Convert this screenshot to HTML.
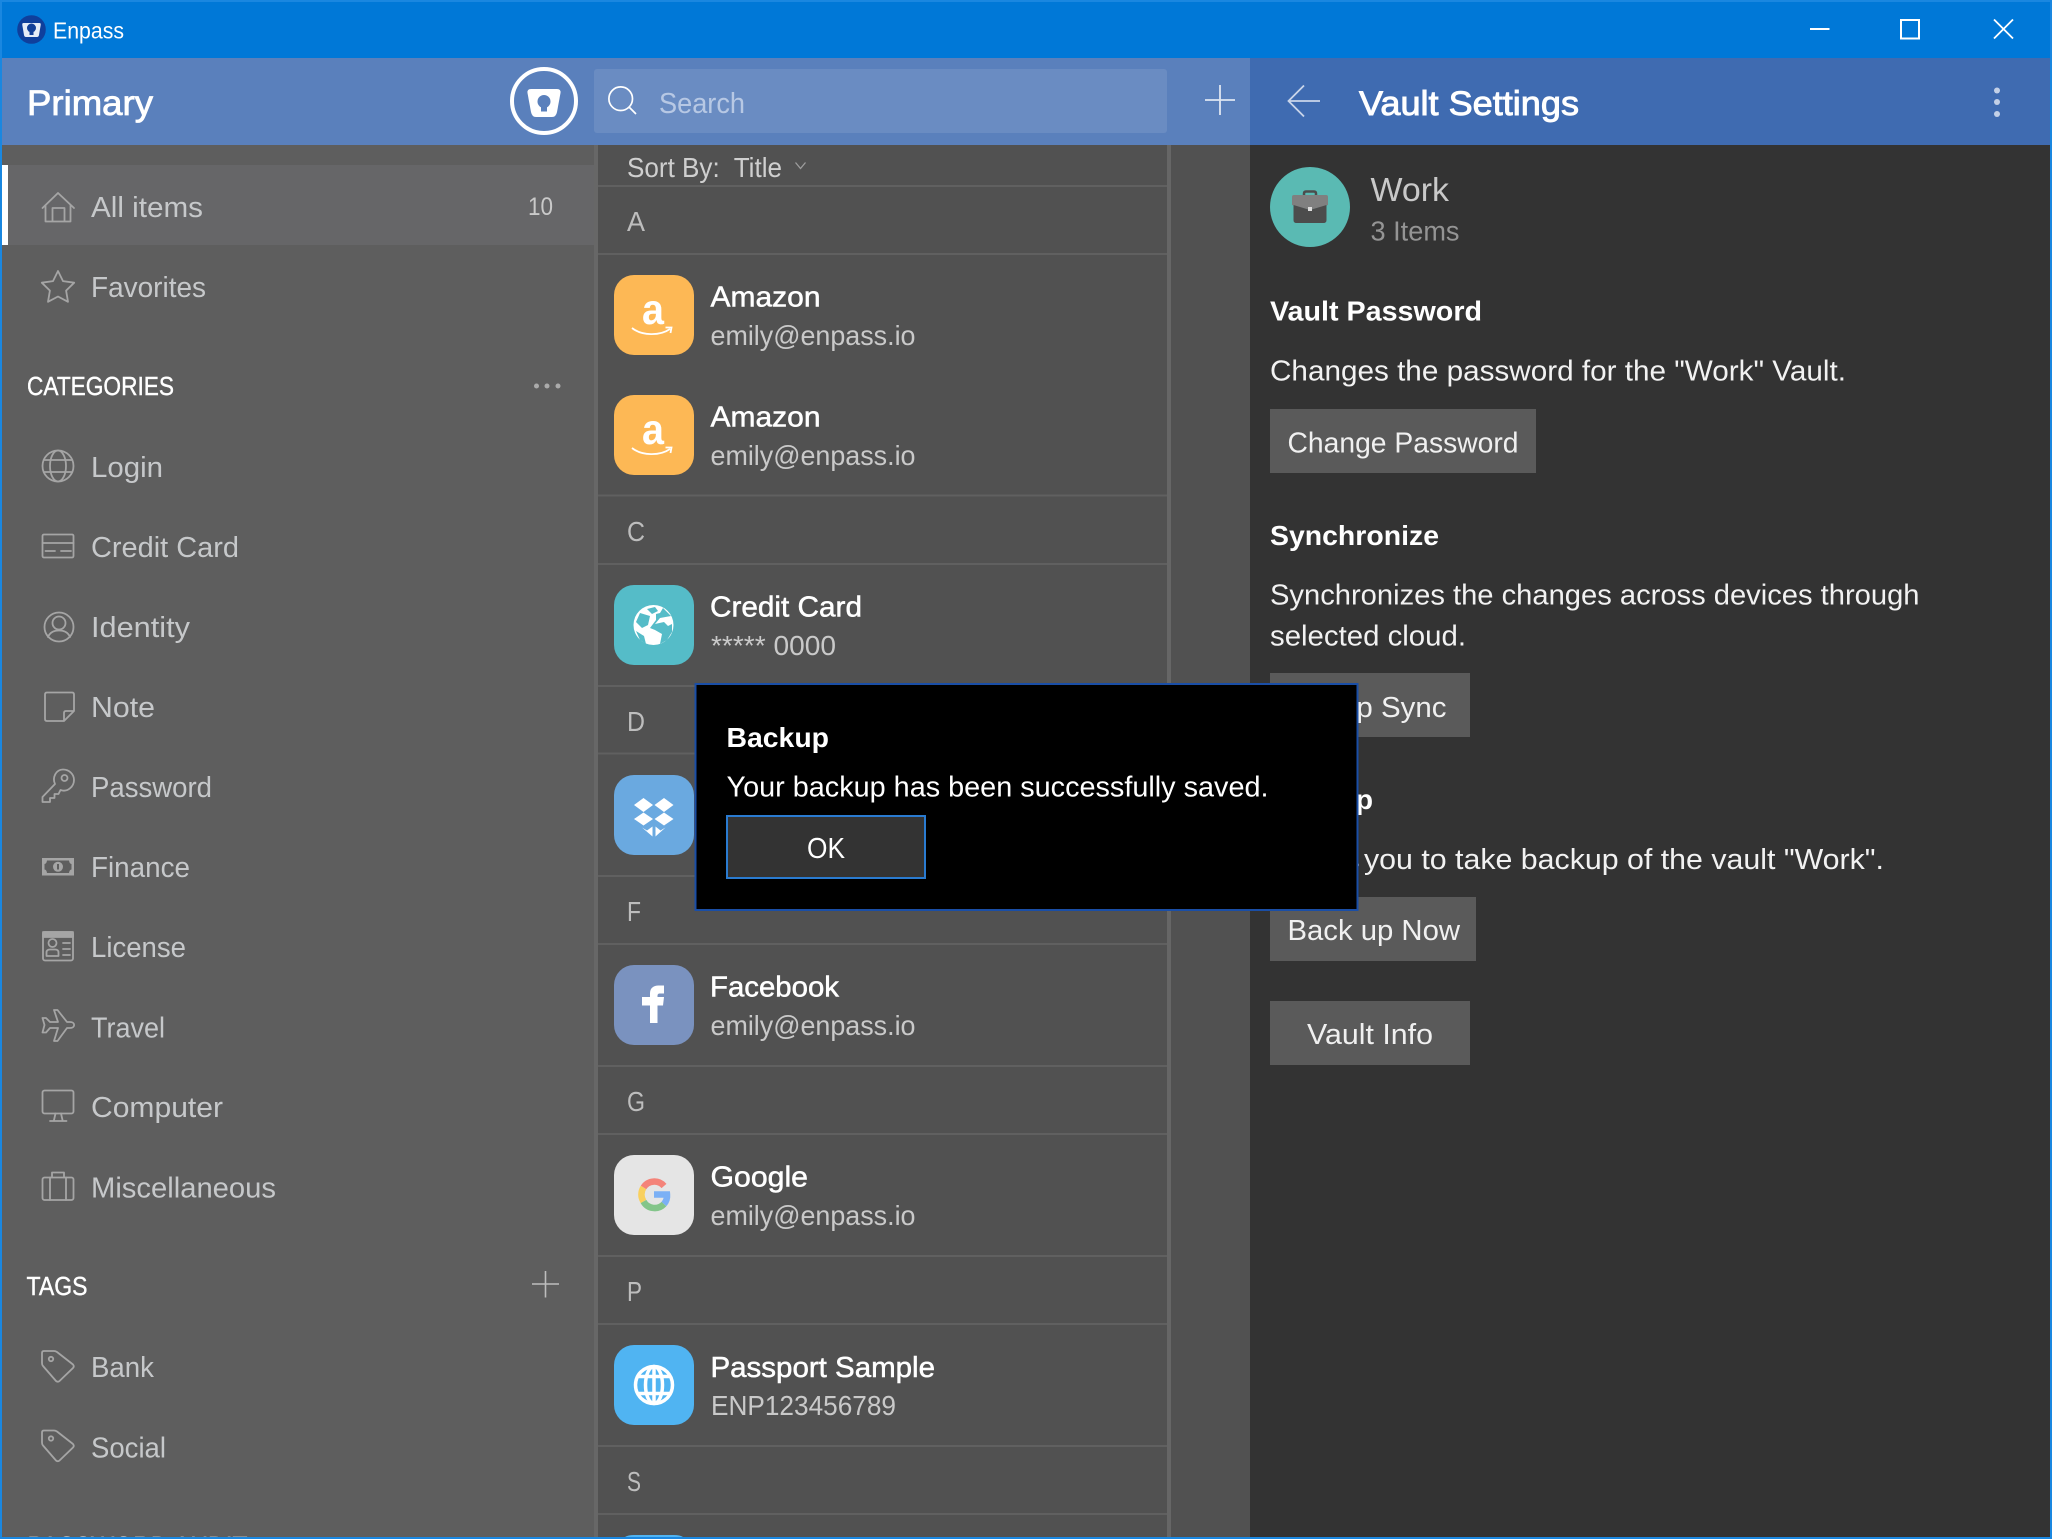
<!DOCTYPE html>
<html>
<head>
<meta charset="utf-8">
<title>Enpass</title>
<style>
html,body{margin:0;padding:0;background:#333;overflow:hidden;width:2052px;height:1539px}
svg{display:block;position:absolute;left:0;top:0}
text{font-family:"Liberation Sans",sans-serif;white-space:pre}
.nav{font-size:29px;fill:#c6c8ca}
.hd{font-size:26px;fill:#fff;stroke:#fff;stroke-width:.4px}
.ti{font-size:29px;fill:#fff;stroke:#fff;stroke-width:.5px}
.su{font-size:28px;fill:#c9c9c9}
.le{font-size:28px;fill:#bdbdbd}
.bd{font-size:29px;fill:#f2f2f2}
.bt{font-size:29px;fill:#f0f0f0}
.b{font-size:28px;fill:#fff;font-weight:bold}
.ic{fill:none;stroke:#a5a5a5;stroke-width:1.8;stroke-linejoin:round;stroke-linecap:round}
.ln{fill:#606060}
</style>
</head>
<body>
<svg width="2052" height="1539" viewBox="0 0 2052 1539" xmlns="http://www.w3.org/2000/svg">
<!-- backgrounds -->
<rect width="2052" height="1539" fill="#333333"/>
<rect x="0" y="145" width="594" height="1394" fill="#5e5e5e"/>
<rect x="594" y="145" width="4" height="1394" fill="#676767"/>
<rect x="598" y="145" width="652" height="1394" fill="#515151"/>
<rect x="1167" y="145" width="4" height="1394" fill="#666666"/>
<!-- title bar -->
<rect width="2052" height="58" fill="#0078d7"/>
<rect x="0" y="58" width="1250" height="87" fill="#5a80bc"/>
<rect x="1250" y="58" width="802" height="87" fill="#3f6bb1"/>

<!-- app icon -->
<circle cx="31.500" cy="29.500" r="14.300" fill="#0f3f9c"/>
<path d="M23.500 23 H39.500 Q41 23 40.700 25 L39 35 Q38.700 37 37 37 H26 Q24.300 37 24 35 L22.300 25 Q22 23 23.500 23Z" fill="#e6ecf7"/>
<circle cx="31.500" cy="28" r="4.500" fill="#123f98"/><rect x="29.500" y="29" width="4" height="6" fill="#123f98"/>
<text x="53" y="38.500" style="font-size:23px;fill:#fff" textLength="71" lengthAdjust="spacingAndGlyphs">Enpass</text>

<!-- window controls -->
<rect x="1810" y="28" width="19.500" height="2" fill="#fff"/>
<rect x="1901" y="20" width="18" height="18.500" fill="none" stroke="#fff" stroke-width="2"/>
<path d="M1994 19.500 L2013 38.500 M2013 19.500 L1994 38.500" stroke="#fff" stroke-width="1.800" fill="none"/>

<!-- header left -->
<text class="ti" x="27" y="115" style="font-size:35px;stroke-width:.8px" textLength="126" lengthAdjust="spacingAndGlyphs">Primary</text>
<circle cx="544" cy="101" r="32" fill="none" stroke="#fff" stroke-width="4"/>
<path d="M531 89 H557 Q561 89 560.500 93 L557 112 Q556 117 552 117 H536 Q532 117 531 112 L527.500 93 Q527 89 531 89Z" fill="#fff"/>
<circle cx="544" cy="101.500" r="6.500" fill="#5a80bc"/><rect x="541" y="102" width="6" height="9.500" fill="#5a80bc"/>

<!-- search -->
<rect x="594" y="69" width="573" height="64" rx="3" fill="#6a8cc2"/>
<circle cx="620.700" cy="98.700" r="11.800" fill="none" stroke="#fff" stroke-width="1.700"/>
<path d="M629 107 L636 114" stroke="#fff" stroke-width="1.700" fill="none"/>
<text x="659" y="113" style="font-size:29px;fill:#b7c8e4" textLength="86" lengthAdjust="spacingAndGlyphs">Search</text>
<path d="M1220 85 V115 M1205 100 H1235" stroke="#dfe6f2" stroke-width="1.800" fill="none"/>

<!-- header right -->
<path d="M1320 101 H1289 M1304 85.500 L1288.500 101 L1304 116.500" fill="none" stroke="#c9d5ea" stroke-width="1.800"/>
<text class="ti" x="1359" y="115" style="font-size:34px;stroke-width:.9px" textLength="220" lengthAdjust="spacingAndGlyphs">Vault Settings</text>
<circle cx="1997" cy="90.500" r="3" fill="#c3d0e7"/><circle cx="1997" cy="102" r="3" fill="#c3d0e7"/><circle cx="1997" cy="114" r="3" fill="#c3d0e7"/>

<!-- sidebar -->
<rect x="2" y="165" width="592" height="80" fill="#666668"/>
<rect x="2" y="165" width="6" height="80" fill="#fff"/>

<path class="ic" d="M42.500 208 L58 193 L74 208 M45.500 205 V221.500 H70.500 V205 M52.500 221.500 V208 H64.500 V221.500"/>
<text class="nav" x="91" y="217" textLength="112" lengthAdjust="spacingAndGlyphs">All items</text>
<text x="528" y="215" style="font-size:25px;fill:#c9c9c9" textLength="25" lengthAdjust="spacingAndGlyphs">10</text>

<path class="ic" d="M58 271 L63 281.100 L74.200 282.700 L66.100 290.600 L68 301.800 L58 296.500 L48 301.800 L49.900 290.600 L41.800 282.700 L53 281.100 Z"/>
<text class="nav" x="91" y="297" textLength="115" lengthAdjust="spacingAndGlyphs">Favorites</text>

<text class="hd" x="27" y="395" textLength="147" lengthAdjust="spacingAndGlyphs">CATEGORIES</text>
<circle cx="536.500" cy="386" r="2.500" fill="#ababab"/><circle cx="547" cy="386" r="2.500" fill="#ababab"/><circle cx="558" cy="386" r="2.500" fill="#ababab"/>

<g class="ic"><circle cx="58" cy="466" r="15.500"/><ellipse cx="58" cy="466" rx="8" ry="15.500"/><path d="M44.500 460 H71.500 M44.500 472 H71.500"/></g>
<text class="nav" x="91" y="477" textLength="72" lengthAdjust="spacingAndGlyphs">Login</text>

<g class="ic"><rect x="42.500" y="534.500" width="31" height="23" rx="1.500"/><path d="M42.500 543 H73.500 M45.500 551 H55 M61 551 H71"/></g>
<text class="nav" x="91" y="557" textLength="148" lengthAdjust="spacingAndGlyphs">Credit Card</text>

<g class="ic"><circle cx="59" cy="627" r="14.500"/><circle cx="59" cy="623" r="6.500"/><path d="M48 637 C50 632 54 630.500 59 630.500 C64 630.500 68 632 70 637"/></g>
<text class="nav" x="91" y="637" textLength="99" lengthAdjust="spacingAndGlyphs">Identity</text>

<path class="ic" d="M47 692.500 H72 Q74 692.500 74 694.500 V711 L64 721 H47 Q45 721 45 719 V694.500 Q45 692.500 47 692.500 Z M74 711 H66 Q64 711 64 713 V721"/>
<text class="nav" x="91" y="717" textLength="64" lengthAdjust="spacingAndGlyphs">Note</text>

<g class="ic"><path d="M55 784 L42.500 797 V802 H50 V798 H54.500 V794 H58.500 L60.500 790 C67 792.500 74 787 74 780 C74 774 69 769.500 63 769.500 C56 769.500 52 777.500 55 784 Z"/><circle cx="64.500" cy="778" r="3"/></g>
<text class="nav" x="91" y="797" textLength="121" lengthAdjust="spacingAndGlyphs">Password</text>

<rect x="42" y="858" width="32" height="17.500" fill="#a5a5a5"/>
<path d="M47 860.500 H69 Q69.500 864 71.500 864 V869.500 Q69.500 869.500 69 873 H47 Q46.500 869.500 44.500 869.500 V864 Q46.500 864 47 860.500Z" fill="#5e5e5e"/>
<circle cx="58" cy="866.800" r="5" fill="#a5a5a5"/><rect x="57" y="864" width="2" height="5.500" fill="#5e5e5e"/>
<text class="nav" x="91" y="877" textLength="99" lengthAdjust="spacingAndGlyphs">Finance</text>

<g class="ic"><rect x="43" y="932" width="30" height="28.500" rx="2"/><rect x="43" y="932" width="30" height="5" fill="#a5a5a5"/><circle cx="52.500" cy="943" r="4"/><path d="M46.500 956 V952.500 Q46.500 949.500 50 949.500 H55 Q58.500 949.500 58.500 952.500 V956 Z M63 943 H70 M63 949 H70 M63 955 H70"/></g>
<text class="nav" x="91" y="957" textLength="95" lengthAdjust="spacingAndGlyphs">License</text>

<path class="ic" d="M42.500 1018 H46 L50 1022 H58 L54 1010 H57.500 L67 1022 H70 C75.500 1022 75.500 1028 70 1028 H67 L57.500 1041 H54 L58 1028 H50 L46 1032.500 H42.500 L44.500 1025 Z"/>
<text class="nav" x="91" y="1037.500" textLength="74" lengthAdjust="spacingAndGlyphs">Travel</text>

<g class="ic"><rect x="42.500" y="1090.500" width="31" height="23" rx="2"/><path d="M55.500 1113.500 L54 1120 M61 1113.500 L62.500 1120 M50 1121 H66.500"/></g>
<text class="nav" x="91" y="1117" textLength="132" lengthAdjust="spacingAndGlyphs">Computer</text>

<g class="ic"><rect x="42.500" y="1177.500" width="31" height="22.500" rx="2"/><path d="M50 1177.500 V1200 M66 1177.500 V1200 M52 1177.500 V1172.500 H64 V1177.500"/></g>
<text class="nav" x="91" y="1197.500" textLength="185" lengthAdjust="spacingAndGlyphs">Miscellaneous</text>

<text class="hd" x="26.500" y="1295" textLength="61" lengthAdjust="spacingAndGlyphs">TAGS</text>
<path d="M545.500 1271 V1297.500 M532 1284 H559" stroke="#bdbdbd" stroke-width="1.600" fill="none"/>

<g class="ic"><path d="M44 1351 H54 Q55.500 1351 57 1352 L73 1364.500 Q74.500 1366.500 73 1368 L59.500 1381 Q58 1382.500 56 1381 L43 1366 Q42 1365 42 1363 V1353 Q42 1351 44 1351 Z"/><circle cx="51" cy="1359" r="2.200"/></g>
<text class="nav" x="91" y="1377" textLength="63" lengthAdjust="spacingAndGlyphs">Bank</text>
<g class="ic" transform="translate(0 79.500)"><path d="M44 1351 H54 Q55.500 1351 57 1352 L73 1364.500 Q74.500 1366.500 73 1368 L59.500 1381 Q58 1382.500 56 1381 L43 1366 Q42 1365 42 1363 V1353 Q42 1351 44 1351 Z"/><circle cx="51" cy="1359" r="2.200"/></g>
<text class="nav" x="91" y="1457.500" textLength="75" lengthAdjust="spacingAndGlyphs">Social</text>
<svg x="0" y="1530" width="400" height="7" viewBox="0 0 400 7"><text class="hd" x="27.500" y="25" textLength="220" lengthAdjust="spacingAndGlyphs">PASSWORD AUDIT</text></svg>

<!-- list -->
<text x="627" y="177" style="font-size:28px;fill:#cfcfcf" textLength="155" lengthAdjust="spacingAndGlyphs">Sort By:  Title</text>
<path d="M795.500 162.500 L800.500 168.500 L805.500 162.500" fill="none" stroke="#9d9d9d" stroke-width="1.300"/>
<rect class="ln" x="598" y="185" width="569" height="2"/>
<text class="le" x="627" y="231" textLength="18" lengthAdjust="spacingAndGlyphs">A</text>
<rect class="ln" x="598" y="253" width="569" height="2"/>

<rect x="614" y="275" width="80" height="80" rx="20" fill="#fdb855"/>
<text x="642" y="324" style="font-size:43px;font-weight:bold;fill:#fff" textLength="22" lengthAdjust="spacingAndGlyphs">a</text>
<path d="M632 328 C642 336 660 336 670 329 M665.500 327.500 L671.500 327.500 L670.500 333" fill="none" stroke="#fff" stroke-width="1.800"/>
<text class="ti" x="710.500" y="306.700" textLength="110" lengthAdjust="spacingAndGlyphs">Amazon</text>
<text class="su" x="710.500" y="345" textLength="205" lengthAdjust="spacingAndGlyphs">emily@enpass.io</text>

<rect x="614" y="395" width="80" height="80" rx="20" fill="#fdb855"/>
<text x="642" y="444" style="font-size:43px;font-weight:bold;fill:#fff" textLength="22" lengthAdjust="spacingAndGlyphs">a</text>
<path d="M632 448 C642 456 660 456 670 449 M665.500 447.500 L671.500 447.500 L670.500 453" fill="none" stroke="#fff" stroke-width="1.800"/>
<text class="ti" x="710.500" y="426.700" textLength="110" lengthAdjust="spacingAndGlyphs">Amazon</text>
<text class="su" x="710.500" y="465" textLength="205" lengthAdjust="spacingAndGlyphs">emily@enpass.io</text>

<rect class="ln" x="598" y="494.500" width="569" height="2"/>
<text class="le" x="627" y="541" textLength="18" lengthAdjust="spacingAndGlyphs">C</text>
<rect class="ln" x="598" y="563" width="569" height="2"/>

<rect x="614" y="585" width="80" height="80" rx="20" fill="#55bcc8"/>
<circle cx="653.500" cy="625" r="20" fill="#fff"/>
<path d="M640 613 L650 616 L648 625 L642 628 L636 622 Z M647 609 L655 607 L658 611 L652 614 Z M663 608 L671 616 L660 618 L655 624 L664 622 L668 626 L672 624 L672 632 L667 640 L660 644 L662 634 L655 630 L650 628 L656 620 L656 614 L660 613 Z M636 631 L644 636 L646 644 L640 640 Z" fill="#55bcc8"/>
<text class="ti" x="710" y="616.700" textLength="152" lengthAdjust="spacingAndGlyphs">Credit Card</text>
<text class="su" x="711" y="655" textLength="125" lengthAdjust="spacingAndGlyphs">***** 0000</text>

<rect class="ln" x="598" y="685" width="569" height="2"/>
<text class="le" x="627" y="731" textLength="18" lengthAdjust="spacingAndGlyphs">D</text>
<rect class="ln" x="598" y="752.500" width="569" height="2"/>

<rect x="614" y="775" width="80" height="80" rx="20" fill="#6aa9e0"/>
<path d="M643.500 798 L653 805 L643.500 812 L634 805 Z M664 798 L673.500 805 L664 812 L654.500 805 Z M643.500 812.500 L653 819 L643.500 825.500 L634 819 Z M664 812.500 L673.500 819 L664 825.500 L654.500 819 Z" fill="#fff"/>
<path d="M642 827.500 L647 830.500 L652.500 826.500 V836.500 Z M665.500 827.500 L660.500 830.500 L655.500 826.500 V836.500 Z" fill="#fff"/>

<rect class="ln" x="598" y="875" width="569" height="2"/>
<text class="le" x="627" y="921" textLength="14" lengthAdjust="spacingAndGlyphs">F</text>
<rect class="ln" x="598" y="943" width="569" height="2"/>

<rect x="614" y="965" width="80" height="80" rx="20" fill="#7a92bf"/>
<path d="M650 1023 V1005.500 H642 V997 H650 V993.500 C650 988 653.500 985.500 658.500 985.500 H664 V993.500 H660 C658 993.500 657.500 994.500 657.500 996 V997 H664 L663 1005.500 H657.500 V1023 Z" fill="#fff"/>
<text class="ti" x="710" y="996.700" textLength="129" lengthAdjust="spacingAndGlyphs">Facebook</text>
<text class="su" x="710.500" y="1035" textLength="205" lengthAdjust="spacingAndGlyphs">emily@enpass.io</text>

<rect class="ln" x="598" y="1065" width="569" height="2"/>
<text class="le" x="627" y="1111" textLength="18" lengthAdjust="spacingAndGlyphs">G</text>
<rect class="ln" x="598" y="1133" width="569" height="2"/>

<rect x="614" y="1155" width="80" height="80" rx="20" fill="#e5e5e5"/>
<g fill="none" stroke-width="6.500">
<path d="M664 1186 A12.800 12.800 0 0 0 643.500 1187.500" stroke="#f48379"/>
<path d="M643.500 1187.500 A12.800 12.800 0 0 0 643.500 1201.500" stroke="#f9d05e"/>
<path d="M643.500 1201.500 A12.800 12.800 0 0 0 664 1204" stroke="#83c58a"/>
<path d="M664 1204 A12.800 12.800 0 0 0 667 1194.500 H654" stroke="#7bb0f5"/>
</g>
<text class="ti" x="710.500" y="1186.700" textLength="97.500" lengthAdjust="spacingAndGlyphs">Google</text>
<text class="su" x="710.500" y="1225" textLength="205" lengthAdjust="spacingAndGlyphs">emily@enpass.io</text>

<rect class="ln" x="598" y="1255" width="569" height="2"/>
<text class="le" x="627" y="1301" textLength="15" lengthAdjust="spacingAndGlyphs">P</text>
<rect class="ln" x="598" y="1323" width="569" height="2"/>

<rect x="614" y="1345" width="80" height="80" rx="20" fill="#50b4f2"/>
<g fill="none" stroke="#fff" stroke-width="3.500"><circle cx="654" cy="1385" r="18.500"/><ellipse cx="654" cy="1385" rx="8.500" ry="18.500"/><path d="M654 1366.500 V1403.500 M638 1376.500 H670 M638 1393.500 H670"/></g>
<text class="ti" x="710.500" y="1377" textLength="224.500" lengthAdjust="spacingAndGlyphs">Passport Sample</text>
<text class="su" x="711" y="1415" textLength="185" lengthAdjust="spacingAndGlyphs">ENP123456789</text>

<rect class="ln" x="598" y="1445" width="569" height="2"/>
<text class="le" x="627" y="1491" textLength="14" lengthAdjust="spacingAndGlyphs">S</text>
<rect class="ln" x="598" y="1513" width="569" height="2"/>
<path d="M625 1537 Q628 1535 634 1535 H674 Q680 1535 683 1537 Z" fill="#50b4f2"/>

<!-- right pane -->
<circle cx="1310" cy="207" r="40" fill="#5abab3"/>
<path d="M1304 196 V193.500 Q1304 191.500 1306 191.500 H1314 Q1316 191.500 1316 193.500 V196" fill="none" stroke="#4c4c4c" stroke-width="2.500"/>
<path d="M1294 195 H1326 Q1328 195 1328 197 V205 L1310 210 L1292 205 V197 Q1292 195 1294 195Z" fill="#808080"/>
<path d="M1293.500 205 L1310 210 L1326.500 205 V220 Q1326.500 223 1323.500 223 H1296.500 Q1293.500 223 1293.500 220 Z" fill="#4c4c4c"/>
<rect x="1308" y="207" width="4" height="4" fill="#ddd"/>
<text x="1370.500" y="201" style="font-size:33px;fill:#c9c9c9" textLength="78.500" lengthAdjust="spacingAndGlyphs">Work</text>
<text x="1370.500" y="240.700" style="font-size:28px;fill:#949494" textLength="89" lengthAdjust="spacingAndGlyphs">3 Items</text>

<text class="b" x="1270" y="320.700" textLength="212" lengthAdjust="spacingAndGlyphs">Vault Password</text>
<text class="bd" x="1270" y="380.700" textLength="576" lengthAdjust="spacingAndGlyphs">Changes the password for the "Work" Vault.</text>
<rect x="1270" y="409" width="266" height="64" fill="#5a5a5a"/>
<text class="bt" x="1287.500" y="452.700" textLength="231" lengthAdjust="spacingAndGlyphs">Change Password</text>

<text class="b" x="1270" y="545" textLength="169" lengthAdjust="spacingAndGlyphs">Synchronize</text>
<text class="bd" x="1270" y="604.500" textLength="649.500" lengthAdjust="spacingAndGlyphs">Synchronizes the changes across devices through</text>
<text class="bd" x="1270" y="645.400" textLength="196" lengthAdjust="spacingAndGlyphs">selected cloud.</text>
<rect x="1270" y="673" width="200" height="64" fill="#5a5a5a"/>
<text class="bt" x="1287.500" y="717" textLength="159" lengthAdjust="spacingAndGlyphs">Set up Sync</text>

<text class="b" x="1270" y="809" textLength="103" lengthAdjust="spacingAndGlyphs">Backup</text>
<text class="bd" x="1270" y="869" textLength="90" lengthAdjust="spacingAndGlyphs">Allows</text>
<text class="bd" x="1364" y="869" textLength="520" lengthAdjust="spacingAndGlyphs">you to take backup of the vault "Work".</text>
<rect x="1270" y="897" width="206" height="64" fill="#5a5a5a"/>
<text class="bt" x="1287.500" y="940" textLength="172.500" lengthAdjust="spacingAndGlyphs">Back up Now</text>
<rect x="1270" y="1001" width="200" height="64" fill="#5a5a5a"/>
<text class="bt" x="1307" y="1044" textLength="126" lengthAdjust="spacingAndGlyphs">Vault Info</text>

<!-- dialog -->
<rect x="695.500" y="684" width="662" height="226" fill="#000" stroke="#1a4ea6" stroke-width="2"/>
<text class="b" x="726.500" y="747" textLength="102.500" lengthAdjust="spacingAndGlyphs">Backup</text>
<text x="726.500" y="796.700" style="font-size:29px;fill:#fff" textLength="542" lengthAdjust="spacingAndGlyphs">Your backup has been successfully saved.</text>
<rect x="727" y="816" width="198" height="62" fill="#333" stroke="#2a7bd0" stroke-width="2"/>
<text x="807" y="858" style="font-size:29px;fill:#fff" textLength="38" lengthAdjust="spacingAndGlyphs">OK</text>

<!-- window border -->
<rect x="0" y="0" width="2052" height="2" fill="#1a87e0"/>
<rect x="0" y="0" width="2" height="1539" fill="#1a87e0"/>
<rect x="2050" y="0" width="2" height="1539" fill="#1a87e0"/>
<rect x="0" y="1537" width="2052" height="2" fill="#1a87e0"/>
</svg>
</body>
</html>
